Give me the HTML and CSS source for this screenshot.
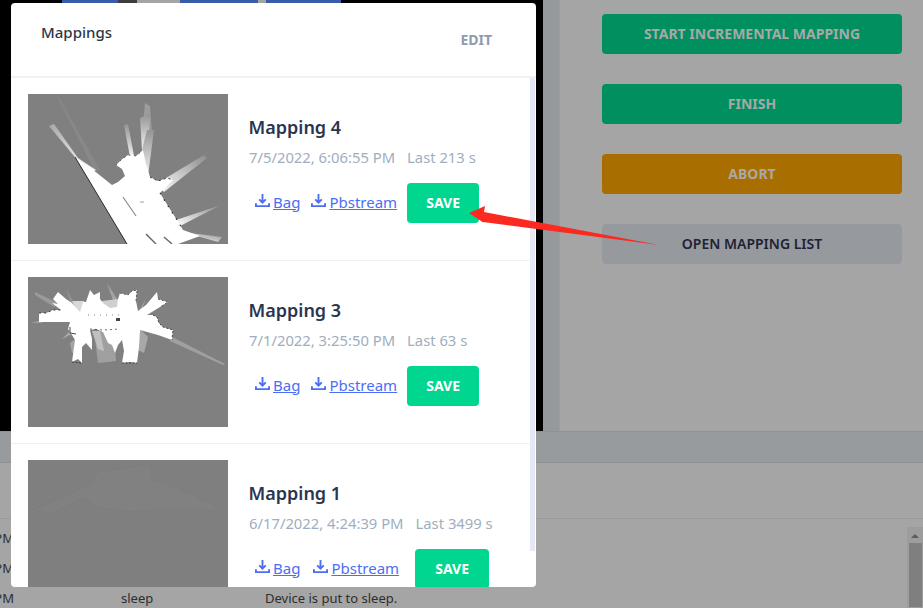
FILE: index.html
```html
<!DOCTYPE html>
<html lang="en">
<head>
    <meta charset="UTF-8">
    <meta name="viewport" content="width=device-width, initial-scale=1.0">
    <title>Mappings</title>
    <link rel="stylesheet" href="styles.css">
</head>
<body>
    <div class="top">
        <div class="canvas">
            <div class="camera-strip"></div>
        </div>
        <div class="gutter"></div>
        <div class="panel">
            <button class="btn btn-green">START INCREMENTAL MAPPING</button>
            <button class="btn btn-green">FINISH</button>
            <button class="btn btn-amber">ABORT</button>
            <button class="btn btn-gray">OPEN MAPPING LIST</button>
        </div>
    </div>
    <div class="tabs"></div>
    <div class="log">
        <div class="log-rows">
            <div class="log-row"><span class="log-time">PM</span></div>
            <div class="log-row"><span class="log-time">PM</span></div>
            <div class="log-row"><span class="log-time">PM</span><span>sleep</span><span>Device is put to sleep.</span></div>
        </div>
        <div class="log-scroll">
            <div class="log-scroll-arrow"></div>
            <div class="log-scroll-thumb"></div>
        </div>
    </div>

    <div class="modal">
        <div class="modal-head">
            <span class="modal-title">Mappings</span>
            <span class="modal-edit">EDIT</span>
        </div>
        <div class="modal-body">
            <div class="list">
                <div class="item">
                    <svg class="map" viewBox="0 0 200 150">
                        <defs>
                            <filter id="soft"><feGaussianBlur stdDeviation="0.5"/></filter>
                            <linearGradient id="ray1" x1="0" y1="0" x2="1" y2="1">
                                <stop offset="0" stop-color="#a8a8a8"/>
                                <stop offset="1" stop-color="#ffffff"/>
                            </linearGradient>
                            <linearGradient id="ray2" x1="0" y1="0" x2="0" y2="1">
                                <stop offset="0" stop-color="#949494"/>
                                <stop offset="1" stop-color="#f4f4f4"/>
                            </linearGradient>
                            <linearGradient id="ray3" x1="1" y1="0" x2="0" y2="1">
                                <stop offset="0" stop-color="#8c8c8c"/>
                                <stop offset="1" stop-color="#ffffff"/>
                            </linearGradient>
                        </defs>
                        <rect width="200" height="150" fill="#808080"/>
                        <g filter="url(#soft)">
                            <polygon points="30,4 32,5 72,76 67,78" fill="#888888"/>
                            <polygon points="21,32 26,30 50,64 68,76 60,80 46,62" fill="url(#ray1)"/>
                            <polygon points="96,31 100,30 106,62 102,63" fill="url(#ray2)"/>
                            <polygon points="117,9 122,12 124,40 114,40" fill="#9c9c9c"/>
                            <polygon points="112,24 122,20 120,56 114,56" fill="url(#ray2)"/>
                            <polygon points="119,36 126,36 120,82 114,56" fill="url(#ray2)"/>
                            <polygon points="176,61 179,64 136,98 128,90" fill="url(#ray3)"/>
                            <polygon points="193,111 148,126 152,132" fill="url(#ray3)"/>
                            <polygon points="155,138 194,143 190,148" fill="url(#ray3)"/>
                            <polygon points="47,63 69,79 84,91 90,88 97,82 94,75 88,71 93,66 100,61 108,62 115,56 118,70 122,83 130,87 139,84 145,86 132,99 140,112 149,126 155,136 172,142 150,150 99,150" fill="#ffffff"/>
                            <polyline points="47,63 99,150" fill="none" stroke="#1a1a1a" stroke-width="0.9"/>
                            <polyline points="88,71 93,66 100,61 108,62 115,56" fill="none" stroke="#444444" stroke-width="0.8" stroke-dasharray="1.5 4"/>
                            <polyline points="122,83 130,87 139,84 145,86" fill="none" stroke="#333333" stroke-width="1" stroke-dasharray="2 3"/>
                            <polyline points="132,99 140,112 149,126 155,136" fill="none" stroke="#222222" stroke-width="1.1" stroke-dasharray="1.5 6"/>
                            <polyline points="95,103 108,122" fill="none" stroke="#8a8a8a" stroke-width="1.2"/>
                            <polyline points="112,108 116,108" fill="none" stroke="#8a8a8a" stroke-width="0.8"/>
                            <polyline points="118,140 128,150" fill="none" stroke="#666666" stroke-width="1.4"/>
                            <polyline points="136,143 144,150" fill="none" stroke="#666666" stroke-width="1.4"/>
                        </g>
                    </svg>
                    <div class="info">
                        <h3 class="name">Mapping 4</h3>
                        <p class="meta"><span>7/5/2022, 6:06:55 PM</span><span>Last 213 s</span></p>
                        <div class="actions">
                            <a class="dl" href="#"><svg viewBox="0 0 16 16"><path d="M8 1v9M4.5 6.8 8 10.3l3.5-3.5M1 11v3h14v-3"/></svg><u>Bag</u></a>
                            <a class="dl" href="#"><svg viewBox="0 0 16 16"><path d="M8 1v9M4.5 6.8 8 10.3l3.5-3.5M1 11v3h14v-3"/></svg><u>Pbstream</u></a>
                            <button class="save">SAVE</button>
                        </div>
                    </div>
                </div>
                <div class="item">
                    <svg class="map" viewBox="0 0 200 150">
                        <rect width="200" height="150" fill="#808080"/>
                        <g filter="url(#soft)">
                            <polygon points="7,15 30,26 26,30 7,18" fill="#9a9a9a"/>
                            <polygon points="3,46 14,43 14,46" fill="#a0a0a0"/>
                            <polygon points="79,6 94,30 88,32" fill="#a4a4a4"/>
                            <polygon points="38,11 48,30 44,30" fill="#939393"/>
                            <polygon points="118,22 110,36 112,36" fill="#b0b0b0"/>
                            <polygon points="144,60 197,87 195,88 142,64" fill="#a0a0a0"/>
                            <polygon points="34,62 46,50 46,56" fill="#a8a8a8"/>
                            <polygon points="42,66 50,60 50,74 44,76" fill="#a4a4a4"/>
                            <polygon points="66,54 86,54 88,84 70,86" fill="#a0a0a0"/>
                            <polygon points="110,50 120,60 116,76 108,72" fill="#a8a8a8"/>
                            <polygon points="44,24 56,24 62,36 50,36" fill="#d8d8d8"/>
                            <polygon points="74,24 90,22 90,36 74,36" fill="#cfcfcf"/>
                            <polygon points="11,36 18,36 25,33 33,33 24,26 30,27 25,22 30,15 38,22 44,26 50,33 52,35 55,25 58,25 62,13 66,18 72,15 72,22 75,26 82,31 89,30 90,22 92,16 100,18 104,14 109,13 108,24 110,34 118,28 129,15 130,22 140,25 132,30 119,38 125,38 129,40 131,46 135,50 145,53 144,63 130,58 112,53 111,70 109,86 102,85 94,86 96,74 94,63 90,68 87,76 84,68 80,66 75,55 68,52 62,53 64,62 64,73 58,66 54,70 54,86 50,82 44,85 47,63 44,58 40,52 42,45 28,45 11,45" fill="#ffffff"/>
                            <polygon points="64,54 72,54 76,74 70,72" fill="#c0c0c0"/>
                            <polyline points="11,36 18,36 25,33 33,33" fill="none" stroke="#333333" stroke-width="0.9" stroke-dasharray="2 3"/>
                            <polyline points="92,16 100,18 104,14 109,13 108,24" fill="none" stroke="#444444" stroke-width="0.8" stroke-dasharray="2 2"/>
                            <polyline points="130,22 140,25 132,30" fill="none" stroke="#444444" stroke-width="0.8" stroke-dasharray="2 2"/>
                            <polyline points="125,38 129,40 131,46 135,50 145,53 144,63" fill="none" stroke="#333333" stroke-width="0.9" stroke-dasharray="2 2"/>
                            <polyline points="94,86 109,86" fill="none" stroke="#333333" stroke-width="0.9" stroke-dasharray="2 1.5"/>
                            <polyline points="44,85 54,86" fill="none" stroke="#333333" stroke-width="0.9" stroke-dasharray="2 1.5"/>
                            <polyline points="42,50 42,56 48,57" fill="none" stroke="#333333" stroke-width="0.9"/>
                            <polyline points="62,52 75,53 92,52" fill="none" stroke="#444444" stroke-width="0.8" stroke-dasharray="2 3"/>
                            <polyline points="60,38 96,38" fill="none" stroke="#555555" stroke-width="0.7" stroke-dasharray="1 5"/>
                            <rect x="88" y="41" width="4" height="3" fill="#444444"/>
                        </g>
                    </svg>
                    <div class="info">
                        <h3 class="name">Mapping 3</h3>
                        <p class="meta"><span>7/1/2022, 3:25:50 PM</span><span>Last 63 s</span></p>
                        <div class="actions">
                            <a class="dl" href="#"><svg viewBox="0 0 16 16"><path d="M8 1v9M4.5 6.8 8 10.3l3.5-3.5M1 11v3h14v-3"/></svg><u>Bag</u></a>
                            <a class="dl" href="#"><svg viewBox="0 0 16 16"><path d="M8 1v9M4.5 6.8 8 10.3l3.5-3.5M1 11v3h14v-3"/></svg><u>Pbstream</u></a>
                            <button class="save">SAVE</button>
                        </div>
                    </div>
                </div>
                <div class="item">
                    <svg class="map" viewBox="0 0 200 150">
                        <rect width="200" height="150" fill="#7f7f7f"/>
                        <polygon points="4,50 60,26 70,12 122,4 124,20 150,28 196,50 120,50 106,52 68,48 56,38 24,54" fill="#818181" stroke="#7c7c7c" stroke-width="0.6"/>
                    </svg>
                    <div class="info">
                        <h3 class="name">Mapping 1</h3>
                        <p class="meta"><span>6/17/2022, 4:24:39 PM</span><span>Last 3499 s</span></p>
                        <div class="actions actions-wide">
                            <a class="dl" href="#"><svg viewBox="0 0 16 16"><path d="M8 1v9M4.5 6.8 8 10.3l3.5-3.5M1 11v3h14v-3"/></svg><u>Bag</u></a>
                            <a class="dl" href="#"><svg viewBox="0 0 16 16"><path d="M8 1v9M4.5 6.8 8 10.3l3.5-3.5M1 11v3h14v-3"/></svg><u>Pbstream</u></a>
                            <button class="save">SAVE</button>
                        </div>
                    </div>
                </div>
            </div>
            <div class="modal-scroll"></div>
        </div>
    </div>

    <svg class="arrow" viewBox="0 0 923 608">
        <polygon points="469,213 485,206 484,212 659,245 483,222 484,223" fill="#fb2a20"/>
    </svg>
</body>
</html>
```

FILE: styles.css
```css
body {
    font-family: "Noto Sans", Arial, sans-serif;
    margin: 0;
    width: 923px;
    height: 608px;
    overflow: hidden;
    background-color: #a5a5a5;
    color: #2e2e2e;
    font-size: 13px;
}
.top {
    display: flex;
    height: 431px;
}
.canvas {
    width: 543px;
    background-color: #000;
}
.camera-strip {
    height: 3px;
    margin-left: 62px;
    width: 279px;
    background: linear-gradient(90deg, #3a5ba8 0 56px, #3c3c3c 56px 75px, #a5a5a5 75px 118px, #3a5ba8 118px 196px, #a5a5a5 196px 204px, #3a5ba8 204px);
}
.gutter {
    width: 17px;
    background-color: #96999c;
}
.panel {
    flex: 1;
    display: flex;
    flex-direction: column;
    gap: 30px;
    padding: 14px 21px 0 42px;
    background-color: #a5a5a5;
    border-left: 1px solid #9b9d9f;
    margin-left: -1px;
}
.btn {
    height: 40px;
    border: none;
    border-radius: 4px;
    padding: 0 0 2px;
    font-family: inherit;
    font-size: 14px;
    font-weight: 700;
    color: #a8a8a8;
}
.btn-green {
    background-color: #008f5f;
}
.btn-amber {
    background-color: #a86f00;
}
.btn-gray {
    background-color: #96999e;
    color: #1f2233;
    font-weight: 600;
}
.tabs {
    height: 30px;
    background-color: #989b9e;
    border-top: 1px solid #8f9295;
    border-bottom: 1px solid #8f9295;
}
.log {
    display: flex;
    height: 89px;
    overflow: hidden;
    margin-top: 55px;
    border-top: 1px solid #9c9a9f;
}
.log-rows {
    flex: 1;
    padding-top: 4px;
}
.log-row {
    display: grid;
    grid-template-columns: 121px 144px 1fr;
    height: 29px;
    align-items: center;
    white-space: nowrap;
}
.log-row + .log-row {
    margin-top: 1px;
}
.log-time {
    display: flex;
    justify-content: flex-end;
    width: 14px;
}
.log-scroll {
    width: 16px;
    margin-top: 8px;
    background-color: #9d9d9d;
}
.log-scroll-arrow {
    width: 0;
    height: 0;
    margin: 7px auto 5px;
    border-left: 4px solid transparent;
    border-right: 4px solid transparent;
    border-bottom: 4px solid #5c5c5c;
}
.log-scroll-thumb {
    width: 13px;
    height: 64px;
    margin-left: 2px;
    background-color: #7f7f7f;
}
.modal {
    position: absolute;
    top: 3px;
    left: 11px;
    width: 525px;
    height: 584px;
    background-color: #fff;
    border-radius: 4px;
    overflow: hidden;
}
.modal-head {
    display: flex;
    justify-content: space-between;
    box-sizing: border-box;
    height: 75px;
    padding: 19px 44px 0 30px;
    border-bottom: 2px solid #edf2f7;
}
.modal-title {
    font-size: 15px;
    font-weight: 500;
    color: #2d3748;
}
.modal-edit {
    font-size: 14px;
    font-weight: 700;
    color: #8f9bb0;
    padding-top: 8px;
}
.modal-body {
    display: flex;
    align-items: flex-start;
}
.list {
    width: 519px;
}
.modal-scroll {
    width: 5px;
    height: 473px;
    background-color: #e6e9f3;
}
.item {
    display: flex;
    padding: 16px 17px;
    border-bottom: 1px solid #edf2f7;
}
.map {
    width: 200px;
    height: 150px;
    flex-shrink: 0;
}
.info {
    padding: 21px 0 0 21px;
}
.name {
    margin: 0 0 0 -0.5px;
    font-size: 18px;
    line-height: 25px;
    font-weight: 600;
    color: #2a3550;
}
.meta {
    display: flex;
    gap: 12px;
    margin: 8px 0 0;
    font-size: 14.8px;
    line-height: 19px;
    color: #a0aec0;
}
.actions {
    display: flex;
    align-items: center;
    gap: 11px;
    margin-top: 16px;
    padding-left: 6px;
}
.actions .save {
    margin-left: -1px;
}
.actions-wide {
    gap: 13px;
}
.actions-wide .save {
    margin-left: 3px;
    width: 74px;
}
.dl {
    display: flex;
    align-items: center;
    gap: 3px;
    padding-bottom: 3px;
    font-size: 15px;
    color: #4c6ef5;
    text-decoration: none;
}
.dl svg {
    width: 15px;
    height: 15px;
    fill: none;
    stroke: #4c6ef5;
    stroke-width: 2;
    margin-top: -3px;
}
.save {
    width: 72px;
    height: 40px;
    border: none;
    border-radius: 4px;
    padding: 0 0 2px;
    background-color: #00d68f;
    color: #fff;
    font-family: inherit;
    font-size: 14px;
    font-weight: 700;
}
.arrow {
    position: absolute;
    top: 0;
    left: 0;
    width: 923px;
    height: 608px;
    pointer-events: none;
}
```
